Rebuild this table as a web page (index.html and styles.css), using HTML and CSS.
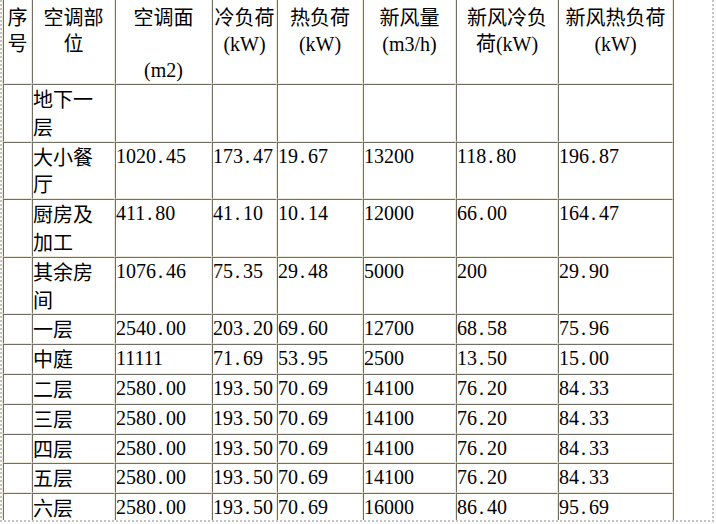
FILE: index.html
```html
<!DOCTYPE html>
<html lang="zh-CN">
<head>
<meta charset="utf-8">
<title>空调负荷表</title>
<link rel="stylesheet" href="styles.css">
</head>
<body>
<div class="frame">
<table class="sheet">
<colgroup>
<col class="c1"><col class="c2"><col class="c3"><col class="c4"><col class="c5"><col class="c6"><col class="c7"><col class="c8">
</colgroup>
<tr class="head">
<td>序<br>号</td>
<td>空调部<br>位</td>
<td>空调面<br><br><span class="u">(m2)</span></td>
<td>冷负荷<br><span class="u">(kW)</span></td>
<td>热负荷<br><span class="u">(kW)</span></td>
<td>新风量<br><span class="u">(m3/h)</span></td>
<td>新风冷负<br>荷<span class="u">(kW)</span></td>
<td>新风热负荷<br><span class="u">(kW)</span></td>
</tr>
<tr>
<td></td><td>地下一<br>层</td><td></td><td></td><td></td><td></td><td></td><td></td>
</tr>
<tr>
<td></td><td>大小餐<br>厅</td><td class="n">1020<span class="d">.</span>45</td><td class="n">173<span class="d">.</span>47</td><td class="n">19<span class="d">.</span>67</td><td class="n">13200</td><td class="n">118<span class="d">.</span>80</td><td class="n">196<span class="d">.</span>87</td>
</tr>
<tr>
<td></td><td>厨房及<br>加工</td><td class="n">411<span class="d">.</span>80</td><td class="n">41<span class="d">.</span>10</td><td class="n">10<span class="d">.</span>14</td><td class="n">12000</td><td class="n">66<span class="d">.</span>00</td><td class="n">164<span class="d">.</span>47</td>
</tr>
<tr>
<td></td><td>其余房<br>间</td><td class="n">1076<span class="d">.</span>46</td><td class="n">75<span class="d">.</span>35</td><td class="n">29<span class="d">.</span>48</td><td class="n">5000</td><td class="n">200</td><td class="n">29<span class="d">.</span>90</td>
</tr>
<tr>
<td></td><td>一层</td><td class="n">2540<span class="d">.</span>00</td><td class="n">203<span class="d">.</span>20</td><td class="n">69<span class="d">.</span>60</td><td class="n">12700</td><td class="n">68<span class="d">.</span>58</td><td class="n">75<span class="d">.</span>96</td>
</tr>
<tr>
<td></td><td>中庭</td><td class="n">11111</td><td class="n">71<span class="d">.</span>69</td><td class="n">53<span class="d">.</span>95</td><td class="n">2500</td><td class="n">13<span class="d">.</span>50</td><td class="n">15<span class="d">.</span>00</td>
</tr>
<tr>
<td></td><td>二层</td><td class="n">2580<span class="d">.</span>00</td><td class="n">193<span class="d">.</span>50</td><td class="n">70<span class="d">.</span>69</td><td class="n">14100</td><td class="n">76<span class="d">.</span>20</td><td class="n">84<span class="d">.</span>33</td>
</tr>
<tr>
<td></td><td>三层</td><td class="n">2580<span class="d">.</span>00</td><td class="n">193<span class="d">.</span>50</td><td class="n">70<span class="d">.</span>69</td><td class="n">14100</td><td class="n">76<span class="d">.</span>20</td><td class="n">84<span class="d">.</span>33</td>
</tr>
<tr>
<td></td><td>四层</td><td class="n">2580<span class="d">.</span>00</td><td class="n">193<span class="d">.</span>50</td><td class="n">70<span class="d">.</span>69</td><td class="n">14100</td><td class="n">76<span class="d">.</span>20</td><td class="n">84<span class="d">.</span>33</td>
</tr>
<tr>
<td></td><td>五层</td><td class="n">2580<span class="d">.</span>00</td><td class="n">193<span class="d">.</span>50</td><td class="n">70<span class="d">.</span>69</td><td class="n">14100</td><td class="n">76<span class="d">.</span>20</td><td class="n">84<span class="d">.</span>33</td>
</tr>
<tr>
<td></td><td>六层</td><td class="n">2580<span class="d">.</span>00</td><td class="n">193<span class="d">.</span>50</td><td class="n">70<span class="d">.</span>69</td><td class="n">16000</td><td class="n">86<span class="d">.</span>40</td><td class="n">95<span class="d">.</span>69</td>
</tr>
</table>
</div>
</body>
</html>
```

FILE: styles.css
```css
html, body {
  margin: 0;
  padding: 0;
  background: #fff;
}

.frame {
  width: 714px;
  height: 522px;
  box-sizing: border-box;
  border: 2px dotted #c4c4c4;
  border-top: 0;
  overflow: hidden;
}

.sheet {
  table-layout: fixed;
  width: 672px;
  margin-top: -2px;
  border-collapse: separate;
  border-spacing: 0;
  border: 1px solid;
  border-color: #ece9d8 #716f64 #716f64 #ece9d8;
  font-family: "Noto Sans CJK SC", sans-serif;
  font-size: 20px;
  color: #000;
}

.c1 { width: 29px; }
.c2 { width: 83px; }
.c3 { width: 97px; }
.c4 { width: 65px; }
.c5 { width: 86px; }
.c6 { width: 93px; }
.c7 { width: 102px; }
.c8 { width: 115px; }

.sheet td {
  border: 1px solid;
  border-color: #716f64 #ece9d8 #ece9d8 #716f64;
  padding: 0 2px 0 0;
  line-height: 27.8px;
  vertical-align: top;
  text-align: left;
  white-space: nowrap;
  overflow: hidden;
}

.sheet .head td {
  text-align: center;
  line-height: 26px;
  padding: 4px 1px 0;
}

.u {
  font-family: "Liberation Serif", serif;
}

.sheet td.n {
  font-family: "Liberation Serif", serif;
}

.d {
  margin: 0 3px 0 2px;
}
```
